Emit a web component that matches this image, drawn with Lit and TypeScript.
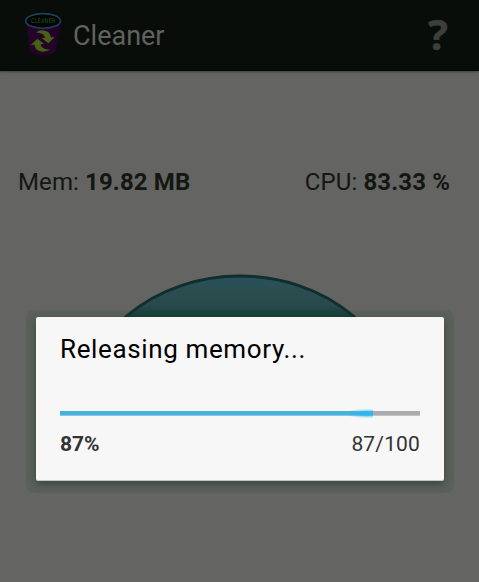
import { LitElement, html, css } from "lit";
import { customElement, property } from "lit/decorators.js";

@customElement("cleaner-logo")
class CleanerLogo extends LitElement {
  static styles = css`
    :host { display: block; width: 40px; height: 48px; }
    svg { display: block; }
    .label { font: 6.4px "DejaVu Sans", sans-serif; fill: #24521a; }
  `;
  render() {
    return html`<svg width="40" height="48" viewBox="0 0 40 48">
      <path d="M1.6 10 L5.6 39 Q7.5 44.4 18.6 44.4 Q30.5 44.4 32.4 39 L36.8 10Z" fill="#230327" />
      <ellipse cx="19.1" cy="9.9" rx="17.4" ry="7.3" fill="#020403" stroke="#1d3f5e" stroke-width="1.6" />
      <text class="label" x="7" y="11.6" textLength="24.5" lengthAdjust="spacingAndGlyphs">CLEANER</text>
      <g fill="#466015">
        <path d="M12 21.4 Q14.5 19.2 18.4 19.3 Q26.2 20 27 26.2 L30.6 26.2 L24.4 32.2 L17.8 27.2 L21.2 26.4 Q19.6 21.6 12 21.4Z" />
        <path d="M26.2 38.6 Q23 40.8 18.6 40.7 Q11.2 40 10.4 33.8 L6.8 33.8 L13.4 27.8 L20 32.8 L16.4 33.6 Q18 38.6 26.2 38.6Z" />
      </g>
    </svg>`;
  }
}

@customElement("progress-dialog")
class ProgressDialog extends LitElement {
  @property({ type: Number }) value = 87;
  @property({ type: Number }) max = 100;
  static styles = css`
    :host {
      display: block; box-sizing: border-box; width: 428px; height: 183px; padding: 7px 10px 12px;
      border-radius: 8px; background: rgba(36, 66, 46, 0.15);
    }
    .panel {
      box-sizing: border-box; height: 164px; padding: 15px 24px 0;
      background: #f7f7f7; border-radius: 2px; border-bottom: 1px solid #c3c6c3;
      box-shadow: 0 3px 7px rgba(38, 56, 44, 0.6);
    }
    .title { height: 34px; line-height: 34px; font-size: 26px; color: #000; white-space: nowrap; letter-spacing: 0.63px; }
    .track { margin-top: 45px; height: 5px; background: #acabae; box-shadow: inset 0 -1px #c4c3c5; }
    .fill { position: relative; height: 5px; background: #47b2de; box-shadow: inset 0 -1px #83c9e5; }
    .glow {
      position: absolute; right: 0; top: -2px; width: 26px; height: 9px;
      background: radial-gradient(ellipse 22px 5px at 78% 50%, #2db7ee 25%, rgba(51, 181, 229, 0.35) 65%, transparent);
    }
    .row { display: flex; justify-content: space-between; margin-top: 15px; line-height: 26px; font-size: 21px; color: #333; }
    .row b { font-weight: 700; }
    .row span { letter-spacing: 0.15px; }
  `;
  render() {
    const percent = Math.round((this.value / this.max) * 100);
    return html`
      <div class="panel">
        <div class="title">Releasing memory...</div>
        <div class="track"><div class="fill" style="width:${percent}%"><div class="glow"></div></div></div>
        <div class="row"><b>${percent}%</b><span>${this.value}/${this.max}</span></div>
      </div>
    `;
  }
}

@customElement("app-root")
class AppRoot extends LitElement {
  static styles = css`
    :host {
      display: flex; flex-direction: column; position: relative; height: 582px; overflow: hidden;
      background: #646562; font-family: Roboto, sans-serif;
    }
    header {
      box-sizing: border-box; height: 71px; flex: none; display: flex; align-items: center;
      padding: 0 31px 0 24px; background: #080d09; border-bottom: 1px solid #040403;
      box-shadow: 0 1px 2px rgba(30, 30, 30, 0.5);
    }
    h1 { margin: 2px 0 0 9px; flex: 1; font-size: 27px; font-weight: 400; color: #60625f; }
    .stats { display: flex; justify-content: space-between; margin-top: 96px; padding: 0 29px 0 18px; line-height: 30px; font-size: 24px; letter-spacing: 0.12px; color: #141613; }
    .disc { display: block; margin: 77px auto 0; flex: none; }
    progress-dialog { position: absolute; left: 26px; top: 310px; }
    .help { font: 700 42px/60px "Open Sans", sans-serif; margin-top: -3px; color: #3b403a; -webkit-text-stroke: 0.4px #3b403a; }
  `;
  render() {
    return html`
      <header>
        <cleaner-logo></cleaner-logo>
        <h1>Cleaner</h1>
        <span class="help">?</span>
      </header>
      <div class="stats">
        <span>Mem: <b>19.82 MB</b></span>
        <span>CPU: <b>83.33 %</b></span>
      </div>
      <svg class="disc" width="362" height="190" viewBox="0 0 362 190">
        <defs>
          <linearGradient id="g" x1="0" y1="0" x2="0" y2="42" gradientUnits="userSpaceOnUse">
            <stop offset="0" stop-color="#2c4f5a" />
            <stop offset="0.25" stop-color="#2b4f57" />
            <stop offset="0.38" stop-color="#2a4f4b" />
            <stop offset="0.5" stop-color="#2a4b50" />
            <stop offset="0.75" stop-color="#284a4c" />
            <stop offset="0.9" stop-color="#1b4443" />
            <stop offset="1" stop-color="#173f3c" />
          </linearGradient>
        </defs>
        <ellipse cx="181" cy="138" rx="160" ry="136" fill="url(#g)" stroke="#102f2c" stroke-width="2.8" />
      </svg>
      <progress-dialog .value=${87} .max=${100}></progress-dialog>
    `;
  }
}
